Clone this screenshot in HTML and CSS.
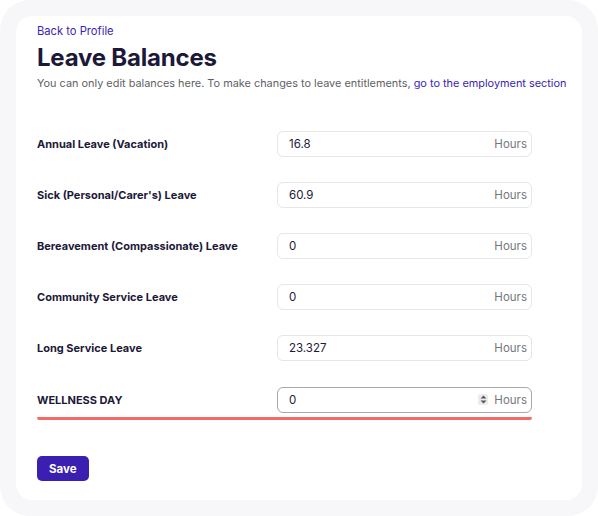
FILE: index.html
```html
<!DOCTYPE html>
<html>
<head>
  <title>Leave Balances</title>
  <link rel="stylesheet" href="styles.css">
</head>
<body>
  <div class="frame">
    <div class="card">
      <a class="back-link" href="#">Back to Profile</a>
      <h1>Leave Balances</h1>
      <p class="subtitle">You can only edit balances here. To make changes to leave entitlements, <a href="#">go to the employment section</a></p>

      <div class="balance-list">
        <div class="balance-row">
          <label class="balance-label">Annual Leave (Vacation)</label>
          <div class="balance-field">
            <input type="text" class="balance-input" value="16.8">
            <span class="unit">Hours</span>
          </div>
        </div>

        <div class="balance-row">
          <label class="balance-label">Sick (Personal/Carer's) Leave</label>
          <div class="balance-field">
            <input type="text" class="balance-input" value="60.9">
            <span class="unit">Hours</span>
          </div>
        </div>

        <div class="balance-row">
          <label class="balance-label">Bereavement (Compassionate) Leave</label>
          <div class="balance-field">
            <input type="text" class="balance-input" value="0">
            <span class="unit">Hours</span>
          </div>
        </div>

        <div class="balance-row">
          <label class="balance-label">Community Service Leave</label>
          <div class="balance-field">
            <input type="text" class="balance-input" value="0">
            <span class="unit">Hours</span>
          </div>
        </div>

        <div class="balance-row">
          <label class="balance-label">Long Service Leave</label>
          <div class="balance-field">
            <input type="text" class="balance-input" value="23.327">
            <span class="unit">Hours</span>
          </div>
        </div>

        <div class="balance-row highlighted">
          <label class="balance-label">WELLNESS DAY</label>
          <div class="balance-field active">
            <input type="text" class="balance-input" value="0">
            <span class="spinner">
              <svg width="7" height="9" viewBox="0 0 7 9"><path d="M3.5 0.5 L6.5 3.5 L0.5 3.5 Z M3.5 8.5 L6.5 5.5 L0.5 5.5 Z" fill="#555"/></svg>
            </span>
            <span class="unit">Hours</span>
          </div>
        </div>
        <div class="underline"></div>
      </div>

      <button class="button">Save</button>
    </div>
  </div>
</body>
</html>
```

FILE: styles.css
```css
body {
  margin: 0;
  background-color: #ffffff;
  font-family: Inter, "Noto Sans", sans-serif;
}

.frame {
  height: 516px;
  box-sizing: border-box;
  padding: 16px 16px 16px 16px;
  background-color: #f7f7f9;
  border-radius: 30px;
}

.card {
  height: 484px;
  box-sizing: border-box;
  background-color: #ffffff;
  border-radius: 16px;
  padding: 7px 0 0 21px;
}

.back-link {
  display: block;
  font-size: 11.2px;
  line-height: 16px;
  color: #3b24b3;
  text-decoration: none;
}

h1 {
  margin: 4px 0 0 0;
  font-size: 24px;
  line-height: 30px;
  font-weight: 700;
  color: #1c1938;
  letter-spacing: -0.2px;
}

.subtitle {
  margin: 2px 0 0 0;
  font-size: 10.9px;
  line-height: 16px;
  color: #5f5f66;
  white-space: nowrap;
}

.subtitle a {
  color: #3b24b3;
  text-decoration: none;
}

.balance-list {
  width: 495px;
  margin-top: 27px;
}

.balance-row {
  display: grid;
  grid-template-columns: 240px 255px;
  align-items: center;
  height: 51.2px;
}

.balance-label {
  font-size: 11px;
  font-weight: 700;
  color: #1c1938;
}

.balance-field {
  display: flex;
  align-items: center;
  height: 26px;
  box-sizing: border-box;
  border: 1px solid #e6e6ea;
  border-radius: 6px;
  padding: 0 4px 0 11px;
}

.balance-field.active {
  border-color: #a7a7ad;
}

.balance-input {
  flex: 1;
  min-width: 0;
  border: none;
  outline: none;
  padding: 0;
  font-family: Inter, "Noto Sans", sans-serif;
  font-size: 11.5px;
  color: #1c1938;
  background: transparent;
}

.unit {
  font-size: 11.5px;
  color: #75757c;
}

.spinner {
  display: flex;
  align-items: center;
  justify-content: center;
  width: 10px;
  height: 11px;
  margin-right: 6px;
  background-color: #ececee;
  border-radius: 2px;
}

.underline {
  height: 3px;
  margin-top: -8px;
  background-color: #f36b66;
  border-radius: 2px 2px 3px 3px / 1px 1px 3px 3px;
}

.button {
  margin-top: 36px;
  padding: 0 12px;
  height: 25px;
  background-color: #3a1fb0;
  color: #ffffff;
  border: none;
  border-radius: 5px;
  font-family: Inter, "Noto Sans", sans-serif;
  font-size: 11.5px;
  font-weight: 700;
  cursor: pointer;
}
```
